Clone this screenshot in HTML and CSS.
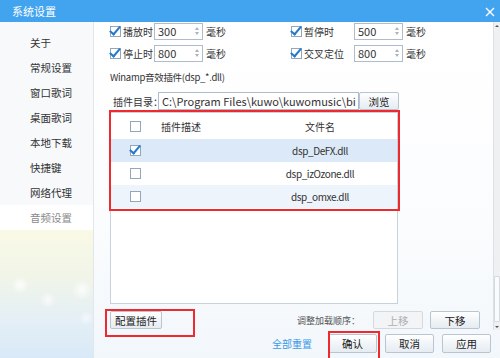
FILE: index.html
```html
<!DOCTYPE html>
<html lang="zh-CN">
<head>
  <meta charset="UTF-8">
  <title>系统设置</title>
  <link rel="stylesheet" href="styles.css">
</head>
<body>
  <div class="window">
    <div class="titlebar">
      <span class="title">系统设置</span>
      <svg class="close" width="10" height="10" viewBox="0 0 10 10"><path d="M1 1 L9 9 M9 1 L1 9" stroke="#fff" stroke-width="1.4"/></svg>
    </div>

    <div class="main">
      <!-- left menu -->
      <div class="sidebar">
        <ul class="nav">
          <li>关于</li>
          <li>常规设置</li>
          <li>窗口歌词</li>
          <li>桌面歌词</li>
          <li>本地下载</li>
          <li>快捷键</li>
          <li>网络代理</li>
          <li class="active">音频设置</li>
        </ul>
        <div class="scenery"></div>
      </div>

      <div class="right">
        <div class="scroll">
          <div class="content">
            <div class="fade-row">
              <div class="fade-item">
                <span class="cb checked"></span><span class="fade-label">播放时</span>
                <span class="spin">300<i></i></span><span class="unit">毫秒</span>
              </div>
              <div class="fade-item">
                <span class="cb checked"></span><span class="fade-label">暂停时</span>
                <span class="spin">500<i></i></span><span class="unit">毫秒</span>
              </div>
            </div>
            <div class="fade-row">
              <div class="fade-item">
                <span class="cb checked"></span><span class="fade-label">停止时</span>
                <span class="spin">800<i></i></span><span class="unit">毫秒</span>
              </div>
              <div class="fade-item">
                <span class="cb checked"></span><span class="fade-label">交叉定位</span>
                <span class="spin">800<i></i></span><span class="unit">毫秒</span>
              </div>
            </div>

            <div class="section-title">Winamp音效插件(dsp_*.dll)</div>

            <div class="dir-row">
              <span class="dir-label">插件目录：</span>
              <span class="dir-input">C:\Program Files\kuwo\kuwomusic\bi</span>
              <span class="btn dir-btn">浏览</span>
            </div>

            <div class="plugin-list">
              <div class="prow head">
                <span class="c-check"><span class="cb"></span></span>
                <span class="c-desc">插件描述</span>
                <span class="c-file">文件名</span>
              </div>
              <div class="prow selected">
                <span class="c-check"><span class="cb checked"></span></span>
                <span class="c-desc"></span>
                <span class="c-file">dsp_DeFX.dll</span>
              </div>
              <div class="prow">
                <span class="c-check"><span class="cb"></span></span>
                <span class="c-desc"></span>
                <span class="c-file">dsp_izOzone.dll</span>
              </div>
              <div class="prow alt">
                <span class="c-check"><span class="cb"></span></span>
                <span class="c-desc"></span>
                <span class="c-file">dsp_omxe.dll</span>
              </div>
            </div>

            <div class="order-row">
              <span class="btn cfg-btn">配置插件</span>
              <span class="order-label">调整加载顺序：</span>
              <span class="btn move-btn disabled">上移</span>
              <span class="btn move-btn">下移</span>
            </div>
          </div>

          <div class="scrollbar">
            <span class="arrow up"></span>
            <span class="thumb"></span>
            <span class="arrow down"></span>
          </div>
        </div>

        <div class="footer">
          <a class="reset" href="#">全部重置</a>
          <span class="btn foot-btn">确认</span>
          <span class="btn foot-btn">取消</span>
          <span class="btn foot-btn">应用</span>
        </div>
      </div>
    </div>

    <!-- red marks -->
    <div class="mark mark-list"></div>
    <div class="mark mark-cfg"></div>
    <div class="mark mark-ok"></div>
  </div>
</body>
</html>
```

FILE: styles.css
```css
* {
  box-sizing: border-box;
}

body {
  margin: 0;
  font-family: "Noto Sans CJK SC", sans-serif;
  font-size: 10.5px;
  color: #333;
  background: #fff;
}

.window {
  position: relative;
  width: 500px;
  height: 358px;
  overflow: hidden;
  display: flex;
  flex-direction: column;
}

.titlebar {
  height: 22px;
  background: #42a3ef;
  color: #fff;
  display: flex;
  align-items: center;
  justify-content: space-between;
  padding: 0 5px 0 12px;
  font-size: 11px;
}

.close {
  margin-top: 1px;
}

.main {
  flex: 1;
  display: flex;
}

/* sidebar */
.sidebar {
  width: 94px;
  display: flex;
  flex-direction: column;
  background: #f7f9fb;
  border-right: 1px solid #e2e7ec;
}

.nav {
  list-style: none;
  margin: 0;
  padding: 8px 0 0 0;
}

.nav li {
  height: 25px;
  line-height: 25px;
  padding-left: 30px;
  color: #333;
}

.nav li.active {
  background: #fff;
  color: #8a8a8a;
}

.scenery {
  flex: 1;
  background:
    radial-gradient(circle at 20px 55px, rgba(255, 255, 255, 0.8) 0, rgba(255, 255, 255, 0) 9px),
    radial-gradient(circle at 48px 70px, rgba(255, 255, 255, 0.7) 0, rgba(255, 255, 255, 0) 8px),
    radial-gradient(circle at 82px 60px, rgba(255, 255, 255, 0.8) 0, rgba(255, 255, 255, 0) 10px),
    radial-gradient(circle at 86px 88px, rgba(255, 255, 255, 0.6) 0, rgba(255, 255, 255, 0) 7px),
    linear-gradient(180deg, #f9f9e6 0%, #f1f5e8 35%, #e4eff6 70%, #d9e9f7 100%);
}

/* right part */
.right {
  flex: 1;
  display: flex;
  flex-direction: column;
  background: linear-gradient(180deg, #ffffff 0%, #fbfcfe 60%, #f2f7fb 100%);
}

.scroll {
  height: 308px;
  display: flex;
}

.content {
  flex: 1;
  padding: 1px 13px 0 16px;
  display: flex;
  flex-direction: column;
}

.fade-row {
  display: flex;
  height: 17px;
  margin-bottom: 5px;
  align-items: center;
}

.fade-item {
  width: 181px;
  display: flex;
  align-items: center;
}

.cb {
  display: inline-block;
  width: 11px;
  height: 11px;
  border: 1px solid #93a7bb;
  background: #fff;
  position: relative;
}

.cb.checked::after {
  content: "";
  position: absolute;
  left: 1px;
  top: -3px;
  width: 4px;
  height: 9px;
  border-right: 2px solid #2479cc;
  border-bottom: 2px solid #2479cc;
  transform: rotate(40deg);
}

.fade-label {
  width: 31px;
  margin-left: 2px;
  font-size: 10px;
  white-space: nowrap;
}

.fade-item:nth-child(2) .fade-label {
  width: 50px;
}

.spin {
  position: relative;
  width: 49px;
  height: 17px;
  border: 1px solid #aebccb;
  background: #fff;
  padding-left: 3px;
  line-height: 15px;
  font-size: 11px;
}

.spin i {
  position: absolute;
  right: 3px;
  top: 3px;
  width: 0;
  height: 0;
  border-left: 2px solid transparent;
  border-right: 2px solid transparent;
  border-bottom: 3px solid #a9b3bd;
}

.spin i::after {
  content: "";
  position: absolute;
  left: -2px;
  top: 5px;
  border-left: 2px solid transparent;
  border-right: 2px solid transparent;
  border-top: 3px solid #a9b3bd;
}

.unit {
  margin-left: 3px;
  font-size: 10px;
}

.section-title {
  margin-top: 3px;
  height: 14px;
  line-height: 14px;
  font-size: 9.5px;
  letter-spacing: -0.3px;
}

.dir-row {
  margin-top: 8px;
  display: flex;
  align-items: center;
  height: 18px;
}

.dir-label {
  width: 48px;
  padding-left: 3px;
  font-size: 10px;
  white-space: nowrap;
}

.dir-input {
  width: 201px;
  height: 18px;
  border: 1px solid #aebccb;
  background: #fff;
  padding-left: 3px;
  line-height: 16px;
  font-size: 11px;
  white-space: nowrap;
  overflow: hidden;
}

.btn {
  display: inline-flex;
  align-items: center;
  justify-content: center;
  height: 18px;
  border: 1px solid #b9c5d1;
  border-radius: 2px;
  background: linear-gradient(180deg, #ffffff 0%, #f1f5f8 50%, #e6ecf1 100%);
  color: #222;
}

.dir-btn {
  width: 40px;
}

/* plugin list */
.plugin-list {
  margin-top: 2px;
  width: 288px;
  height: 192px;
  border: 1px solid #c7d2dd;
  background: #fff;
}

.prow {
  display: flex;
  align-items: center;
  height: 23px;
}

.prow.head {
  height: 26px;
}

.prow.selected {
  background: #dce9f8;
}

.prow.alt {
  background: #eef4fc;
}

.c-check {
  width: 45px;
  padding-left: 19px;
  display: flex;
}

.c-desc {
  width: 50px;
  text-align: center;
  font-size: 10px;
}

.c-file {
  flex: 1;
  text-align: center;
  padding-left: 37px;
  font-size: 10px;
  letter-spacing: -0.4px;
}

.prow.head .c-file {
  letter-spacing: 0;
}

.order-row {
  margin-top: 7px;
  display: flex;
  align-items: center;
}

.cfg-btn {
  width: 52px;
}

.order-label {
  margin-left: auto;
  margin-right: 6px;
  font-size: 9px;
  color: #555;
}

.move-btn {
  width: 50px;
  margin-left: 7px;
}

.move-btn.disabled {
  color: #b0b0b0;
  background: #f2f4f6;
  border-color: #d3d9df;
}

/* scrollbar */
.scrollbar {
  width: 7px;
  display: flex;
  flex-direction: column;
  align-items: center;
  background: #eef0f2;
  border-left: 1px solid #dde1e5;
  padding: 3px 0 2px;
}

.arrow {
  width: 0;
  height: 0;
  border-left: 2px solid transparent;
  border-right: 2px solid transparent;
}

.arrow.up {
  border-bottom: 2px solid #555;
}

.arrow.down {
  border-top: 2px solid #555;
}

.thumb {
  margin-top: auto;
  margin-bottom: 4px;
  width: 6px;
  height: 46px;
  background: #fafbfc;
  border: 1px solid #d4d9de;
  border-radius: 1px;
}

/* footer buttons */
.footer {
  flex: 1;
  display: flex;
  align-items: center;
  padding: 0 9px 1px 0;
  justify-content: flex-end;
}

.reset {
  color: #3b9ae6;
  text-decoration: none;
  font-size: 10px;
  margin-right: 8px;
}

.foot-btn {
  width: 49px;
  height: 19px;
  margin-left: 8px;
}

/* red marks over the screenshot */
.mark {
  position: absolute;
  border: 2px solid #ee2a2e;
}

.mark-list {
  left: 109px;
  top: 110px;
  width: 291px;
  height: 101px;
}

.mark-cfg {
  left: 105px;
  top: 309px;
  width: 90px;
  height: 28px;
}

.mark-ok {
  left: 328px;
  top: 331px;
  width: 52px;
  height: 29px;
}
```
